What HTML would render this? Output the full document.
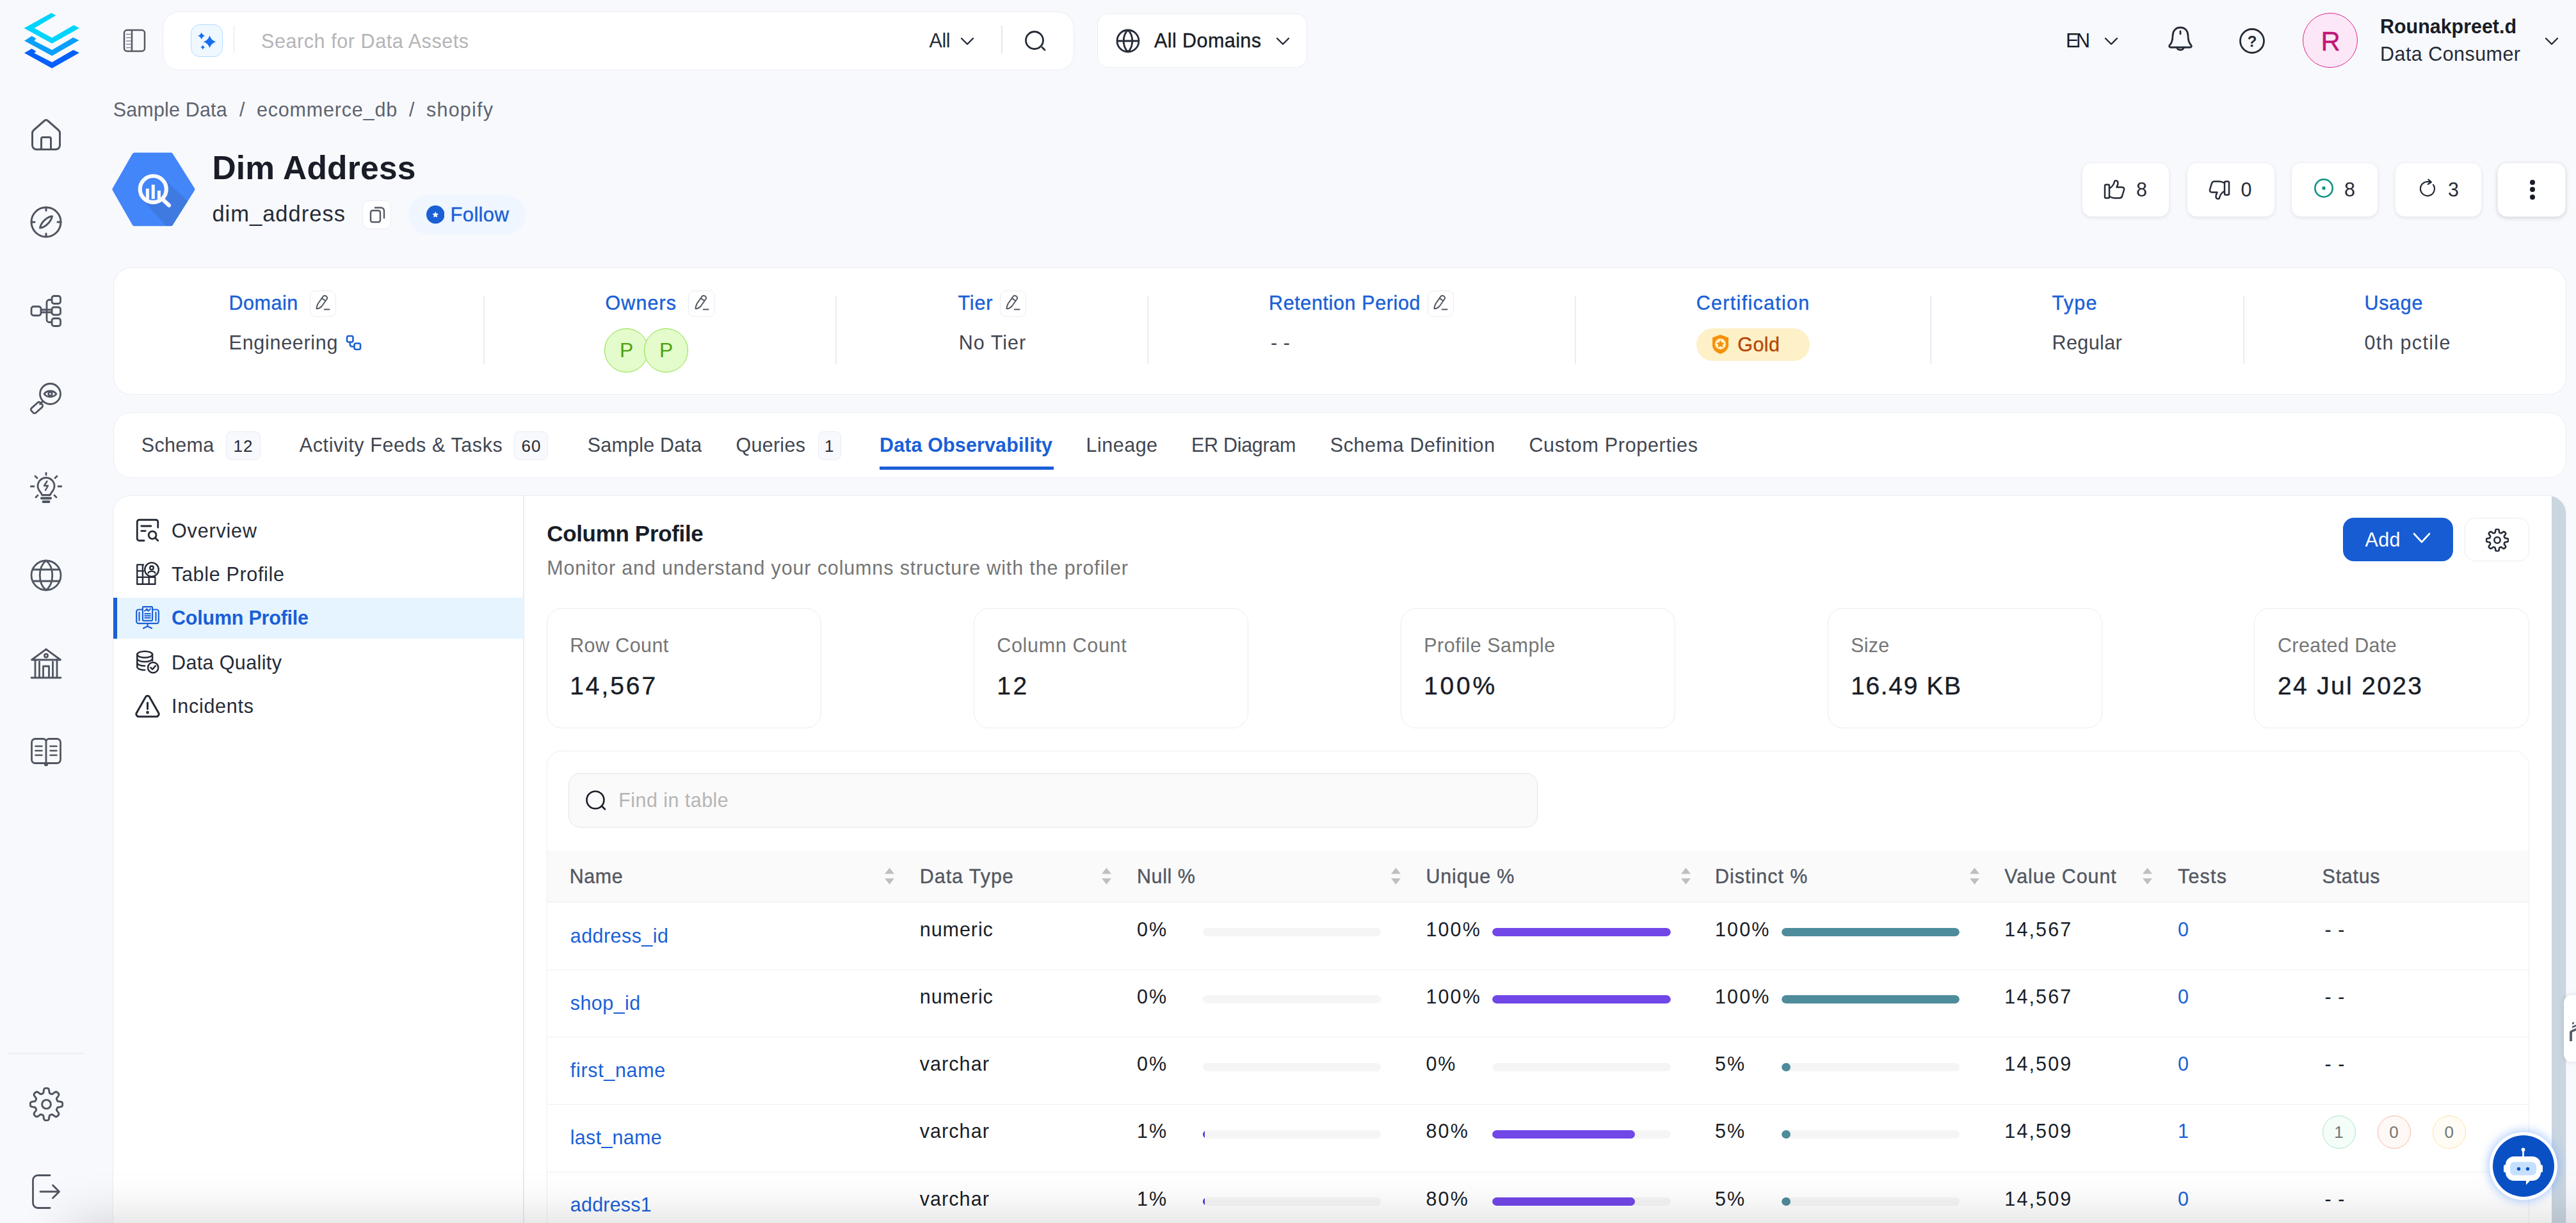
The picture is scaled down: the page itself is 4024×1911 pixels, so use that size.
<!DOCTYPE html>
<html lang="en"><head><meta charset="utf-8"><title>Dim Address - Column Profile</title>
<style>
html,body{margin:0;padding:0;}
body{width:4024px;height:1911px;overflow:hidden;background:#f8f9fc;position:relative;font-family:"Liberation Sans",sans-serif;}
.b{position:absolute;box-sizing:border-box;}
.t{position:absolute;white-space:nowrap;line-height:1;}
.card{position:absolute;box-sizing:border-box;background:#fff;border:1.5px solid #eaecf5;}
</style></head><body>
<svg class="b" style="left:20.0px;top:10.0px;" width="120.0" height="110.0" viewBox="0 0 1334 1223" fill="none">
<path d="M195 378 L670 115 L750 155 L375 378 L680 545 L1060 325 L1155 378 L680 645Z" fill="#00d4fc"/>
<path d="M200 598 L330 515 L405 560 L372 598 L680 755 L1050 540 L1150 590 L680 860Z" fill="#0a9ffb"/>
<path d="M200 810 L330 735 L405 780 L372 812 L680 970 L1050 755 L1155 805 L680 1075Z" fill="#0560fa"/>
</svg>
<svg class="b" style="left:47.0px;top:184.5px;" width="50.0" height="50.0" viewBox="0 0 50 50" fill="none"><g stroke="#4f5561" stroke-width="3" stroke-linecap="round" stroke-linejoin="round"><path d="M3.500 23 Q3.500 20 6 18 L22.500 3.500 Q25 1.500 27.500 3.500 L44 18 Q46.500 20 46.500 23 V42 a6.500 6.500 0 0 1 -6.500 6.500 H10 a6.500 6.500 0 0 1 -6.500 -6.500Z"/><path d="M17.500 48.500 V32 a2.500 2.500 0 0 1 2.500 -2.500 h10 a2.500 2.500 0 0 1 2.500 2.500 V48.500"/></g></svg>
<svg class="b" style="left:47.0px;top:322.0px;" width="50.0" height="50.0" viewBox="0 0 50 50" fill="none"><g stroke="#4f5561" stroke-width="3" stroke-linecap="round" stroke-linejoin="round"><circle cx="25" cy="25" r="23"/><path d="M25 2v5M25 43v5M2 25h5M43 25h5"/><path d="M34.500 16 C29 16 18 23 15.500 34 C21 34 32 27 34.500 16 Z"/></g></svg>
<svg class="b" style="left:47.0px;top:461.0px;" width="50.0" height="50.0" viewBox="0 0 50 50" fill="none"><g stroke="#4f5561" stroke-width="2.8" stroke-linecap="round" stroke-linejoin="round"><rect x="2" y="18" width="15" height="14" rx="3.500"/><rect x="34" y="1.500" width="13.500" height="12" rx="3.500"/><rect x="34" y="19" width="13.500" height="12" rx="3.500"/><rect x="34" y="36.500" width="13.500" height="12" rx="3.500"/><path d="M17 23h17M17 27h17M34 7.500h-4a4 4 0 0 0 -4 4v27a4 4 0 0 0 4 4h4"/></g></svg>
<svg class="b" style="left:47.0px;top:597.0px;" width="50.0" height="50.0" viewBox="0 0 50 50" fill="none"><g stroke="#4f5561" stroke-width="2.8" stroke-linecap="round" stroke-linejoin="round"><circle cx="31.500" cy="18.500" r="16"/><path d="M20 30 L15.500 34.500"/><rect x="1" y="35" width="19" height="10" rx="3" transform="rotate(-42 10.500 40)"/><path d="M22 18.500 C26 12.500 37 12.500 41 18.500 C37 24.500 26 24.500 22 18.500 Z"/><circle cx="31.500" cy="18.500" r="2.800"/></g></svg>
<svg class="b" style="left:47.0px;top:737.5px;" width="50.0" height="50.0" viewBox="0 0 50 50" fill="none"><g stroke="#4f5561" stroke-width="2.8" stroke-linecap="round" stroke-linejoin="round"><path d="M18.500 35.500 c0 -4 -6.500 -6 -6.500 -14 a13 13 0 0 1 26 0 c0 8 -6.500 10 -6.500 14 Z"/><path d="M18 40.500h14M20.500 46h9" stroke-width="4"/><path d="M26.500 14l-4.500 7h6l-4 7" stroke-width="2.400"/><path d="M25 0v4M8 6l3 3M42 6l-3 3M1 22h5M44 22h5M9 39l3-3M41 39l-3-3"/></g></svg>
<svg class="b" style="left:47.0px;top:873.6px;" width="50.0" height="50.0" viewBox="0 0 50 50" fill="none"><g stroke="#4f5561" stroke-width="2.8" stroke-linecap="round" stroke-linejoin="round"><circle cx="25" cy="25" r="23"/><path d="M4.500 16h41M4.500 34h41M25 2c-13 10 -13 36 0 46M25 2c13 10 13 36 0 46"/></g></svg>
<svg class="b" style="left:47.0px;top:1012.0px;" width="50.0" height="50.0" viewBox="0 0 50 50" fill="none"><g stroke="#4f5561" stroke-width="2.8" stroke-linecap="round" stroke-linejoin="round"><path d="M2.500 19 L25 2.500 L47.500 19 Z"/><circle cx="25" cy="12.500" r="2.600"/><path d="M8 19v27M14.500 22v24M35.500 22v24M42 19v27M20.500 46V29h9v17M2 47h46"/></g></svg>
<svg class="b" style="left:47.0px;top:1149.0px;" width="50.0" height="50.0" viewBox="0 0 50 50" fill="none"><g stroke="#4f5561" stroke-width="2.8" stroke-linecap="round" stroke-linejoin="round"><path d="M25 10 V43.500 H8 a5.500 5.500 0 0 1 -5.500 -5.500 V11 a5.500 5.500 0 0 1 5.500 -5.500 H20.500 a4.500 4.500 0 0 1 4.500 4.500 a4.500 4.500 0 0 1 4.500 -4.500 H42 a5.500 5.500 0 0 1 5.500 5.500 V38 a5.500 5.500 0 0 1 -5.500 5.500 H25"/><path d="M8.500 17h10M8.500 24h10M8.500 31h10M31.500 17h10M31.500 24h10M31.500 31h10" stroke-width="2.600"/><circle cx="25" cy="45" r="1.800" fill="#4b515d"/></g></svg>
<div class="b" style="left:12.0px;top:1645.2px;width:120.0px;height:1.6px;background:#eceef2;"></div>
<svg class="b" style="left:45.5px;top:1698.5px;" width="53.0" height="53.0" viewBox="0 0 50 50" fill="none"><g stroke="#4f5561" stroke-width="2.800" stroke-linecap="round"><path d="M25.0 1.2 L25.8 1.2 L26.6 1.3 L27.3 1.5 L28.0 2.0 L28.6 3.1 L29.0 5.1 L29.2 7.0 L29.5 8.2 L29.9 8.7 L30.4 9.0 L30.9 9.3 L31.4 9.5 L31.9 9.7 L32.5 9.9 L33.0 10.0 L33.7 9.9 L34.7 9.3 L36.3 8.1 L37.9 7.0 L39.1 6.6 L40.0 6.8 L40.7 7.1 L41.3 7.6 L41.8 8.2 L42.4 8.7 L42.9 9.3 L43.2 10.0 L43.4 10.9 L43.0 12.1 L41.9 13.7 L40.7 15.3 L40.1 16.3 L40.0 17.0 L40.1 17.5 L40.3 18.1 L40.5 18.6 L40.7 19.1 L41.0 19.6 L41.3 20.1 L41.8 20.5 L43.0 20.8 L44.9 21.0 L46.9 21.4 L48.0 22.0 L48.5 22.7 L48.7 23.4 L48.8 24.2 L48.8 25.0 L48.8 25.8 L48.7 26.6 L48.5 27.3 L48.0 28.0 L46.9 28.6 L44.9 29.0 L43.0 29.2 L41.8 29.5 L41.3 29.9 L41.0 30.4 L40.7 30.9 L40.5 31.4 L40.3 31.9 L40.1 32.5 L40.0 33.0 L40.1 33.7 L40.7 34.7 L41.9 36.3 L43.0 37.9 L43.4 39.1 L43.2 40.0 L42.9 40.7 L42.4 41.3 L41.8 41.8 L41.3 42.4 L40.7 42.9 L40.0 43.2 L39.1 43.4 L37.9 43.0 L36.3 41.9 L34.7 40.7 L33.7 40.1 L33.0 40.0 L32.5 40.1 L31.9 40.3 L31.4 40.5 L30.9 40.7 L30.4 41.0 L29.9 41.3 L29.5 41.8 L29.2 43.0 L29.0 44.9 L28.6 46.9 L28.0 48.0 L27.3 48.5 L26.6 48.7 L25.8 48.8 L25.0 48.8 L24.2 48.8 L23.4 48.7 L22.7 48.5 L22.0 48.0 L21.4 46.9 L21.0 44.9 L20.8 43.0 L20.5 41.8 L20.1 41.3 L19.6 41.0 L19.1 40.7 L18.6 40.5 L18.1 40.3 L17.5 40.1 L17.0 40.0 L16.3 40.1 L15.3 40.7 L13.7 41.9 L12.1 43.0 L10.9 43.4 L10.0 43.2 L9.3 42.9 L8.7 42.4 L8.2 41.8 L7.6 41.3 L7.1 40.7 L6.8 40.0 L6.6 39.1 L7.0 37.9 L8.1 36.3 L9.3 34.7 L9.9 33.7 L10.0 33.0 L9.9 32.5 L9.7 31.9 L9.5 31.4 L9.3 30.9 L9.0 30.4 L8.7 29.9 L8.2 29.5 L7.0 29.2 L5.1 29.0 L3.1 28.6 L2.0 28.0 L1.5 27.3 L1.3 26.6 L1.2 25.8 L1.2 25.0 L1.2 24.2 L1.3 23.4 L1.5 22.7 L2.0 22.0 L3.1 21.4 L5.1 21.0 L7.0 20.8 L8.2 20.5 L8.7 20.1 L9.0 19.6 L9.3 19.1 L9.5 18.6 L9.7 18.1 L9.9 17.5 L10.0 17.0 L9.9 16.3 L9.3 15.3 L8.1 13.7 L7.0 12.1 L6.6 10.9 L6.8 10.0 L7.1 9.3 L7.6 8.7 L8.2 8.2 L8.7 7.6 L9.3 7.1 L10.0 6.8 L10.9 6.6 L12.1 7.0 L13.7 8.1 L15.3 9.3 L16.3 9.9 L17.0 10.0 L17.5 9.9 L18.1 9.7 L18.6 9.5 L19.1 9.3 L19.6 9.0 L20.1 8.7 L20.5 8.2 L20.8 7.0 L21.0 5.1 L21.4 3.1 L22.0 2.0 L22.7 1.5 L23.4 1.3 L24.2 1.2Z" stroke-linejoin="round"/><circle cx="25" cy="25" r="6.500"/></g></svg>
<svg class="b" style="left:47.0px;top:1835.0px;" width="50.0" height="54.0" viewBox="0 -1 50 54" fill="none"><g stroke="#4f5561" stroke-width="2.800" stroke-linecap="round" stroke-linejoin="round"><path d="M31 0.500 H12 a7.500 7.500 0 0 0 -7.500 7.500 V44 a7.500 7.500 0 0 0 7.500 7.500 H31"/><path d="M16 26 H45 M35.500 16 l10 10 -10 10"/></g></svg>
<svg class="b" style="left:192.0px;top:45.0px;" width="36.0" height="37.0" viewBox="0 0 36 37" fill="none"><g stroke="#535862" stroke-width="2.500"><rect x="2" y="2" width="32" height="33" rx="4.500"/><path d="M14 2v33"/><path d="M5 8.500h8M5 13.800h8M5 19h8M5 24.300h8M5 29.500h8" stroke-width="1.400" stroke="#8a8f99"/></g></svg>
<div class="b" style="left:254.0px;top:18.0px;width:1424.0px;height:92.0px;background:#fff;border:1.5px solid #eaecf5;border-radius:26px;"></div>
<div class="b" style="left:298.0px;top:38.0px;width:50.0px;height:51.0px;background:#eff8ff;border:1.5px solid #b2ddff;border-radius:14px;"></div>
<svg class="b" style="left:308.0px;top:48.0px;" width="30.0" height="31.0" viewBox="0 0 30 31" fill="none"><path d="M19.5 7.399999999999999 Q21.852 14.847999999999999 29.3 17.2 Q21.852 19.552 19.5 27.0 Q17.148 19.552 9.7 17.2 Q17.148 14.847999999999999 19.5 7.399999999999999Z" fill="#176fee"/><path d="M6.7 2.3999999999999995 Q8.068 6.731999999999999 12.4 8.1 Q8.068 9.468 6.7 13.8 Q5.332000000000001 9.468 1.0 8.1 Q5.332000000000001 6.731999999999999 6.7 2.3999999999999995Z" fill="#176fee"/><path d="M8.8 22.2 Q9.664000000000001 24.936 12.4 25.8 Q9.664000000000001 26.664 8.8 29.400000000000002 Q7.936000000000001 26.664 5.200000000000001 25.8 Q7.936000000000001 24.936 8.8 22.2Z" fill="#176fee"/></svg>
<div class="b" style="left:364.8px;top:40.0px;width:1.4px;height:43.0px;background:#e3e5ee;"></div>
<span class="t" style="left:408.0px;top:49.2px;font-size:30.5px;color:#b4b4b6;letter-spacing:0.58px;">Search for Data Assets</span>
<span class="t" style="left:1451.5px;top:48.2px;font-size:30.5px;color:#252b37;letter-spacing:-0.43px;">All</span>
<svg class="b" style="left:1500.0px;top:58.0px;" width="22.0" height="13.0" viewBox="0 0 22 13" fill="none"><path d="M2 2 L11 11 L20 2" stroke="#252b37" stroke-width="2.4" stroke-linecap="round" stroke-linejoin="round"/></svg>
<div class="b" style="left:1564.3px;top:40.0px;width:1.4px;height:43.0px;background:#e3e5ee;"></div>
<svg class="b" style="left:1600.0px;top:47.0px;" width="35.0" height="33.0" viewBox="0 0 35 33" fill="none"><circle cx="16" cy="16" r="13.500" stroke="#252b37" stroke-width="2.8"/><path d="M28 27 l4 4" stroke="#252b37" stroke-width="2.8" stroke-linecap="round"/></svg>
<div class="b" style="left:1714.0px;top:21.0px;width:328.0px;height:85.0px;background:#fff;border:1.5px solid #eaecf5;border-radius:18px;"></div>
<svg class="b" style="left:1743.0px;top:45.0px;" width="38.0" height="38.0" viewBox="0 0 38 38" fill="none"><g stroke="#252b37" stroke-width="2.8"><circle cx="19" cy="19" r="17"/><path d="M2 19h34M19 2c-9 8 -9 26 0 34M19 2c9 8 9 26 0 34"/></g></svg>
<span class="t" style="left:1803.0px;top:48.2px;font-size:30.5px;color:#181d27;-webkit-text-stroke:0.4px #181d27;letter-spacing:0.43px;">All Domains</span>
<svg class="b" style="left:1993.0px;top:58.0px;" width="22.0" height="13.0" viewBox="0 0 22 13" fill="none"><path d="M2 2 L11 11 L20 2" stroke="#252b37" stroke-width="2.4" stroke-linecap="round" stroke-linejoin="round"/></svg>
<span class="t" style="left:3227.0px;top:48.2px;font-size:30.5px;color:#181d27;letter-spacing:-4.39px;">EN</span>
<svg class="b" style="left:3287.0px;top:58.0px;" width="22.0" height="13.0" viewBox="0 0 22 13" fill="none"><path d="M2 2 L11 11 L20 2" stroke="#252b37" stroke-width="2.4" stroke-linecap="round" stroke-linejoin="round"/></svg>
<svg class="b" style="left:3386.0px;top:40.0px;" width="40.0" height="42.0" viewBox="0 0 40 42" fill="none"><g stroke="#252b37" stroke-width="2.8" stroke-linecap="round" stroke-linejoin="round"><path d="M20 3 c-8 0 -12 6 -12 13 c0 8 -2 12 -5 15 c-1 1.500 0 3 2 3 h30 c2 0 3 -1.500 2 -3 c-3 -3 -5 -7 -5 -15 c0 -7 -4 -13 -12 -13Z"/><path d="M15 35 c1 4 9 4 10 0"/><path d="M20 9v4"/></g></svg>
<svg class="b" style="left:3497.0px;top:43.0px;" width="42.0" height="42.0" viewBox="0 0 42 42" fill="none"><circle cx="21" cy="21" r="18.500" stroke="#252b37" stroke-width="2.8"/><text x="21" y="30" text-anchor="middle" font-family="Liberation Sans, sans-serif" font-weight="700" font-size="24" fill="#252b37">?</text></svg>
<div class="b" style="left:3597.0px;top:20.0px;width:86.0px;height:86.0px;background:#fce7f6;border:1.5px solid #dd2590;border-radius:50%;"></div>
<span class="t" style="left:3625.5px;top:43.9px;font-size:42px;color:#c11574;-webkit-text-stroke:0.4px #c11574;">R</span>
<span class="t" style="left:3718.0px;top:26.2px;font-size:30.5px;color:#181d27;font-weight:700;letter-spacing:-0.04px;">Rounakpreet.d</span>
<span class="t" style="left:3718.0px;top:68.8px;font-size:30.5px;color:#252b37;letter-spacing:0.45px;">Data Consumer</span>
<svg class="b" style="left:3975.0px;top:58.0px;" width="22.0" height="13.0" viewBox="0 0 22 13" fill="none"><path d="M2 2 L11 11 L20 2" stroke="#252b37" stroke-width="2.4" stroke-linecap="round" stroke-linejoin="round"/></svg>
<span class="t" style="left:176.7px;top:155.7px;font-size:30.5px;color:#5d6370;letter-spacing:0.16px;">Sample Data</span>
<span class="t" style="left:374.0px;top:155.7px;font-size:30.5px;color:#5d6370;">/</span>
<span class="t" style="left:401.0px;top:155.7px;font-size:30.5px;color:#5d6370;letter-spacing:0.81px;">ecommerce_db</span>
<span class="t" style="left:639.0px;top:155.7px;font-size:30.5px;color:#5d6370;">/</span>
<span class="t" style="left:666.0px;top:155.7px;font-size:30.5px;color:#5d6370;letter-spacing:1.22px;">shopify</span>
<svg class="b" style="left:165.0px;top:228.0px;" width="150.0" height="136.0" viewBox="0 0 1349 1223" fill="none">
<defs><clipPath id="hx"><path d="M92 610 L387 96 H933 L1256 610 L933 1124 H387Z"/></clipPath><clipPath id="lens"><circle cx="668" cy="608" r="160"/></clipPath></defs>
<path d="M122 610 L402 122 H918 L1226 610 L918 1098 H402Z" fill="#4386fa" stroke="#4386fa" stroke-width="56" stroke-linejoin="round"/>
<g clip-path="url(#hx)"><path d="M122 610 L402 122 H918 L1226 610 L918 1098 H402Z" fill="#4386fa"/><path d="M840 480 L1400 1010 L1100 1400 L520 760Z" fill="#3e7ae0"/></g>
<path d="M810 760 L890 835" stroke="#f8f9fc" stroke-width="56" stroke-linecap="round"/>
<circle cx="668" cy="608" r="185" fill="#4386fa" stroke="#f8f9fc" stroke-width="55"/>
<g clip-path="url(#lens)" fill="#f8f9fc"><rect x="565" y="600" width="46" height="200"/><rect x="645" y="545" width="46" height="200"/><rect x="727" y="628" width="46" height="200"/></g>
</svg>
<span class="t" style="left:331.4px;top:237.0px;font-size:51.5px;color:#181d27;font-weight:700;letter-spacing:0.23px;">Dim Address</span>
<span class="t" style="left:331.4px;top:316.8px;font-size:34.5px;color:#252b37;letter-spacing:1.00px;">dim_address</span>
<div class="b" style="left:565.5px;top:312.5px;width:45.5px;height:45.5px;background:#fff;border:1.5px solid #eaecf5;border-radius:10px;"></div>
<svg class="b" style="left:577.0px;top:321.0px;" width="25.0" height="28.0" viewBox="0 0 25 28" fill="none"><g stroke="#535862" stroke-width="2.4"><rect x="2" y="8" width="15" height="18" rx="3"/><path d="M8 3.500h10a5 5 0 0 1 5 5v12"/></g></svg>
<div class="b" style="left:638.0px;top:305.0px;width:183.0px;height:60.5px;background:#eff6ff;border-radius:31px;"></div>
<svg class="b" style="left:665.5px;top:321.0px;" width="28.5" height="28.5" viewBox="0 0 28 28" fill="none"><circle cx="14" cy="14" r="14" fill="#1a5fd6"/><path d="M14 7.500l1.900 4.100 4.500.5-3.300 3.100.9 4.400-4-2.200-4 2.200.9-4.400-3.300-3.100 4.500-.5Z" fill="#fff" transform="translate(3.500 3.800) scale(0.75)"/></svg>
<span class="t" style="left:703.5px;top:319.8px;font-size:31px;color:#1a5fd6;-webkit-text-stroke:0.4px #1a5fd6;letter-spacing:0.35px;">Follow</span>
<div class="b" style="left:3251.7px;top:254.0px;width:137.6px;height:84.5px;background:#fff;border:1.5px solid #eef0f6;border-radius:15px;box-shadow:0 2px 5px rgba(16,24,40,.08);"></div>
<div class="b" style="left:3415.5px;top:254.0px;width:138.7px;height:84.5px;background:#fff;border:1.5px solid #eef0f6;border-radius:15px;box-shadow:0 2px 5px rgba(16,24,40,.08);"></div>
<div class="b" style="left:3579.2px;top:254.0px;width:135.8px;height:84.5px;background:#fff;border:1.5px solid #eef0f6;border-radius:15px;box-shadow:0 2px 5px rgba(16,24,40,.08);"></div>
<div class="b" style="left:3741.4px;top:254.0px;width:135.6px;height:84.5px;background:#fff;border:1.5px solid #eef0f6;border-radius:15px;box-shadow:0 2px 5px rgba(16,24,40,.08);"></div>
<div class="b" style="left:3901.3px;top:254.0px;width:106.7px;height:84.5px;background:#fff;border:1.5px solid #eef0f6;border-radius:15px;box-shadow:0 2px 6px rgba(16,24,40,.16);"></div>
<svg class="b" style="left:3285.5px;top:280.0px;" width="34.0" height="32.0" viewBox="0 0 34 32" fill="none"><g stroke="#252b37" stroke-width="2.5" stroke-linejoin="round" stroke-linecap="round"><rect x="2" y="8.500" width="7" height="21" rx="2"/><path d="M9 14 c4 -1 7 -6 8 -10 c.5 -2.500 5.500 -2.500 5.500 2 c0 3 -1.500 5 -2 6.500 h8 c3 0 4 2 3.500 4 l-3 10 c-.7 2 -2 3 -4 3 H17 c-3 0 -5 -1 -8 -2.500"/></g></svg>
<span class="t" style="left:3337.0px;top:281.0px;font-size:30.5px;color:#252b37;">8</span>
<svg class="b" style="left:3449.5px;top:280.5px;transform:rotate(180deg);" width="34.0" height="32.0" viewBox="0 0 34 32" fill="none"><g stroke="#252b37" stroke-width="2.5" stroke-linejoin="round" stroke-linecap="round"><rect x="2" y="8.500" width="7" height="21" rx="2"/><path d="M9 14 c4 -1 7 -6 8 -10 c.5 -2.500 5.500 -2.500 5.500 2 c0 3 -1.500 5 -2 6.500 h8 c3 0 4 2 3.500 4 l-3 10 c-.7 2 -2 3 -4 3 H17 c-3 0 -5 -1 -8 -2.500"/></g></svg>
<span class="t" style="left:3500.5px;top:281.0px;font-size:30.5px;color:#252b37;">0</span>
<svg class="b" style="left:3613.5px;top:278.0px;" width="32.0" height="32.0" viewBox="0 0 32 32" fill="none"><circle cx="16" cy="16" r="13.700" stroke="#0e9384" stroke-width="2.6"/><rect x="13.500" y="13.500" width="5" height="5" rx="1.200" fill="#0e9384"/></svg>
<span class="t" style="left:3662.0px;top:281.0px;font-size:30.5px;color:#252b37;">8</span>
<svg class="b" style="left:3775.6px;top:278.4px;" width="32.0" height="32.0" viewBox="0 0 32 32" fill="none"><g stroke="#252b37" stroke-width="2.200" stroke-linecap="round" stroke-linejoin="round"><path d="M25 10.700 A11 11 0 1 1 21 7.200"/><path d="M17.500 2.600 L21.900 6.600 L16.900 9.800"/></g></svg>
<span class="t" style="left:3824.0px;top:281.0px;font-size:30.5px;color:#252b37;">3</span>
<div class="b" style="left:3952.0px;top:281.0px;width:8.0px;height:8.0px;background:#181d27;border-radius:50%;"></div>
<div class="b" style="left:3952.0px;top:292.3px;width:8.0px;height:8.0px;background:#181d27;border-radius:50%;"></div>
<div class="b" style="left:3952.0px;top:303.5px;width:8.0px;height:8.0px;background:#181d27;border-radius:50%;"></div>
<div class="card" style="left:176.5px;top:417.5px;width:3832.0px;height:199.0px;border-radius:28px;"></div>
<span class="t" style="left:357.6px;top:458.2px;font-size:30.5px;color:#1a5fd6;-webkit-text-stroke:0.4px #1a5fd6;letter-spacing:0.49px;">Domain</span>
<div class="b" style="left:483.5px;top:453.5px;width:41.5px;height:41.5px;background:#fff;border:1.5px solid #eaecf5;border-radius:9px;"></div>
<svg class="b" style="left:490.0px;top:459.5px;" width="29.0" height="29.0" viewBox="0 0 26 26" fill="none"><g stroke="#535862" stroke-width="1.8" stroke-linecap="round" stroke-linejoin="round"><path d="M4 20 c0 -2 1 -5 2 -7 L13 3 c1 -1.500 3 -1.500 4.500 -.5 s1.800 2.800 1 4 L11 17 c-2 2 -4 3 -7 3Z M11.500 5.500 l5 3.500"/><path d="M15 21h7"/></g></svg>
<span class="t" style="left:357.6px;top:519.6px;font-size:30.5px;color:#414651;letter-spacing:0.71px;">Engineering</span>
<svg class="b" style="left:540.0px;top:523.0px;" width="25.0" height="25.0" viewBox="0 0 25 25" fill="none"><g stroke="#1a5fd6" stroke-width="2.600"><rect x="2" y="2" width="9.500" height="9.500" rx="2.500"/><rect x="13.500" y="13.500" width="9.500" height="9.500" rx="2.500"/><path d="M6.800 11.500v4a3 3 0 0 0 3 3h3.700"/></g></svg>
<div class="b" style="left:755.3px;top:461.5px;width:2.0px;height:107.5px;background:#eaecf5;"></div>
<span class="t" style="left:945.5px;top:458.2px;font-size:30.5px;color:#1a5fd6;-webkit-text-stroke:0.4px #1a5fd6;letter-spacing:1.09px;">Owners</span>
<div class="b" style="left:1075.0px;top:453.5px;width:41.5px;height:41.5px;background:#fff;border:1.5px solid #eaecf5;border-radius:9px;"></div>
<svg class="b" style="left:1081.5px;top:459.5px;" width="29.0" height="29.0" viewBox="0 0 26 26" fill="none"><g stroke="#535862" stroke-width="1.8" stroke-linecap="round" stroke-linejoin="round"><path d="M4 20 c0 -2 1 -5 2 -7 L13 3 c1 -1.500 3 -1.500 4.500 -.5 s1.800 2.800 1 4 L11 17 c-2 2 -4 3 -7 3Z M11.500 5.500 l5 3.500"/><path d="M15 21h7"/></g></svg>
<div class="b" style="left:944.0px;top:513.3px;width:68.5px;height:68.5px;background:#e4fbcc;border:1.5px solid #85e13a;border-radius:50%;"></div>
<span class="t" style="left:968.0px;top:530.9px;font-size:32px;color:#4ca30d;">P</span>
<div class="b" style="left:1006.0px;top:513.3px;width:68.5px;height:68.5px;background:#e4fbcc;border:1.5px solid #85e13a;border-radius:50%;"></div>
<span class="t" style="left:1030.0px;top:530.9px;font-size:32px;color:#4ca30d;">P</span>
<div class="b" style="left:1305.0px;top:461.5px;width:2.0px;height:107.5px;background:#eaecf5;"></div>
<span class="t" style="left:1496.5px;top:458.2px;font-size:30.5px;color:#1a5fd6;-webkit-text-stroke:0.4px #1a5fd6;letter-spacing:0.87px;">Tier</span>
<div class="b" style="left:1561.8px;top:453.5px;width:41.5px;height:41.5px;background:#fff;border:1.5px solid #eaecf5;border-radius:9px;"></div>
<svg class="b" style="left:1568.3px;top:459.5px;" width="29.0" height="29.0" viewBox="0 0 26 26" fill="none"><g stroke="#535862" stroke-width="1.8" stroke-linecap="round" stroke-linejoin="round"><path d="M4 20 c0 -2 1 -5 2 -7 L13 3 c1 -1.500 3 -1.500 4.500 -.5 s1.800 2.800 1 4 L11 17 c-2 2 -4 3 -7 3Z M11.500 5.500 l5 3.500"/><path d="M15 21h7"/></g></svg>
<span class="t" style="left:1497.7px;top:519.6px;font-size:30.5px;color:#414651;letter-spacing:1.02px;">No Tier</span>
<div class="b" style="left:1791.8px;top:461.5px;width:2.0px;height:107.5px;background:#eaecf5;"></div>
<span class="t" style="left:1982.0px;top:458.2px;font-size:30.5px;color:#1a5fd6;-webkit-text-stroke:0.4px #1a5fd6;letter-spacing:0.62px;">Retention Period</span>
<div class="b" style="left:2229.7px;top:453.5px;width:41.5px;height:41.5px;background:#fff;border:1.5px solid #eaecf5;border-radius:9px;"></div>
<svg class="b" style="left:2236.2px;top:459.5px;" width="29.0" height="29.0" viewBox="0 0 26 26" fill="none"><g stroke="#535862" stroke-width="1.8" stroke-linecap="round" stroke-linejoin="round"><path d="M4 20 c0 -2 1 -5 2 -7 L13 3 c1 -1.500 3 -1.500 4.500 -.5 s1.800 2.800 1 4 L11 17 c-2 2 -4 3 -7 3Z M11.500 5.500 l5 3.500"/><path d="M15 21h7"/></g></svg>
<span class="t" style="left:1985.0px;top:519.6px;font-size:30.5px;color:#414651;letter-spacing:0.59px;">- -</span>
<div class="b" style="left:2459.7px;top:461.5px;width:2.0px;height:107.5px;background:#eaecf5;"></div>
<span class="t" style="left:2649.8px;top:458.2px;font-size:30.5px;color:#1a5fd6;-webkit-text-stroke:0.4px #1a5fd6;letter-spacing:1.29px;">Certification</span>
<div class="b" style="left:2649.8px;top:513.3px;width:177.5px;height:50.9px;background:#fef0c7;border-radius:26px;"></div>
<svg class="b" style="left:2674.0px;top:522.0px;" width="27.0" height="32.0" viewBox="0 0 27 32" fill="none"><path d="M13.500 1 L26 5.500 V17 c0 7 -5 11.500 -12.500 14 C6 28.500 1 24 1 17 V5.500Z" fill="#f79009"/><circle cx="13.500" cy="15.500" r="8.500" fill="#fef0c7"/><path d="M13.500 9.500l1.900 3.800 4.200.6-3 3 .7 4.200-3.800-2-3.800 2 .7-4.200-3-3 4.200-.6Z" fill="#f79009"/></svg>
<span class="t" style="left:2714.3px;top:522.7px;font-size:30.5px;color:#b54708;-webkit-text-stroke:0.4px #b54708;letter-spacing:0.38px;">Gold</span>
<div class="b" style="left:3015.4px;top:461.5px;width:2.0px;height:107.5px;background:#eaecf5;"></div>
<span class="t" style="left:3205.6px;top:458.2px;font-size:30.5px;color:#1a5fd6;-webkit-text-stroke:0.4px #1a5fd6;letter-spacing:1.27px;">Type</span>
<span class="t" style="left:3205.6px;top:519.6px;font-size:30.5px;color:#414651;letter-spacing:0.38px;">Regular</span>
<div class="b" style="left:3503.6px;top:461.5px;width:2.0px;height:107.5px;background:#eaecf5;"></div>
<span class="t" style="left:3693.4px;top:458.2px;font-size:30.5px;color:#1a5fd6;-webkit-text-stroke:0.4px #1a5fd6;letter-spacing:0.71px;">Usage</span>
<span class="t" style="left:3693.4px;top:519.6px;font-size:30.5px;color:#414651;letter-spacing:1.32px;">0th pctile</span>
<div class="card" style="left:176.5px;top:644.0px;width:3832.0px;height:102.5px;border-radius:28px;"></div>
<span class="t" style="left:220.8px;top:679.8px;font-size:30.5px;color:#414651;letter-spacing:0.31px;">Schema</span>
<div class="b" style="left:352.5px;top:674.4px;width:54.0px;height:44.9px;background:#f8f9fc;border:1.5px solid #eaecf5;border-radius:9px;"></div>
<span class="t" style="left:364.5px;top:684.0px;font-size:26px;color:#252b37;letter-spacing:1.00px;">12</span>
<span class="t" style="left:467.8px;top:679.8px;font-size:30.5px;color:#414651;letter-spacing:0.59px;">Activity Feeds &amp; Tasks</span>
<div class="b" style="left:803.0px;top:674.4px;width:53.0px;height:44.9px;background:#f8f9fc;border:1.5px solid #eaecf5;border-radius:9px;"></div>
<span class="t" style="left:814.5px;top:684.0px;font-size:26px;color:#252b37;letter-spacing:1.00px;">60</span>
<span class="t" style="left:917.7px;top:679.8px;font-size:30.5px;color:#414651;letter-spacing:0.21px;">Sample Data</span>
<span class="t" style="left:1149.4px;top:679.8px;font-size:30.5px;color:#414651;letter-spacing:0.29px;">Queries</span>
<div class="b" style="left:1277.6px;top:674.4px;width:36.0px;height:44.9px;background:#f8f9fc;border:1.5px solid #eaecf5;border-radius:9px;"></div>
<span class="t" style="left:1287.9px;top:684.0px;font-size:26px;color:#252b37;">1</span>
<span class="t" style="left:1374.0px;top:679.8px;font-size:30.5px;color:#1a5fd6;font-weight:700;letter-spacing:0.13px;">Data Observability</span>
<div class="b" style="left:1374.0px;top:729.0px;width:272.0px;height:4.5px;background:#1a5fd6;"></div>
<span class="t" style="left:1696.6px;top:679.8px;font-size:30.5px;color:#414651;letter-spacing:0.49px;">Lineage</span>
<span class="t" style="left:1861.0px;top:679.8px;font-size:30.5px;color:#414651;letter-spacing:-0.29px;">ER Diagram</span>
<span class="t" style="left:2077.7px;top:679.8px;font-size:30.5px;color:#414651;letter-spacing:0.62px;">Schema Definition</span>
<span class="t" style="left:2388.4px;top:679.8px;font-size:30.5px;color:#414651;letter-spacing:0.69px;">Custom Properties</span>
<div class="card" style="left:175.5px;top:773.5px;width:3833px;height:1200px;border-radius:28px 28px 0 0;overflow:hidden;">
<div class="b" style="left:-177px;top:-775px;width:4024px;height:1911px;">
<div class="b" style="left:817.0px;top:774.0px;width:2.0px;height:1137.0px;background:#eaecf5;"></div>
<div class="b" style="left:177.0px;top:934.5px;width:641.0px;height:63.7px;background:#e6f4ff;"></div>
<div class="b" style="left:177.0px;top:934.5px;width:6.0px;height:63.7px;background:#1a5fd6;"></div>
<span class="t" style="left:268.5px;top:814.1px;font-size:30.5px;color:#252b37;letter-spacing:0.83px;">Overview</span>
<span class="t" style="left:268.5px;top:882.5px;font-size:30.5px;color:#252b37;letter-spacing:0.67px;">Table Profile</span>
<span class="t" style="left:268.5px;top:950.9px;font-size:30.5px;color:#1a5fd6;font-weight:700;letter-spacing:-0.22px;">Column Profile</span>
<span class="t" style="left:268.5px;top:1020.1px;font-size:30.5px;color:#252b37;letter-spacing:0.37px;">Data Quality</span>
<span class="t" style="left:268.5px;top:1088.9px;font-size:30.5px;color:#252b37;letter-spacing:0.73px;">Incidents</span>
<svg class="b" style="left:211.5px;top:809.0px;" width="39.0" height="39.0" viewBox="0 0 36 36" fill="none"><g stroke="#252b37" stroke-width="2.6" stroke-linecap="round" stroke-linejoin="round"><path d="M13 33 H6 a3 3 0 0 1 -3 -3 V6 a3 3 0 0 1 3 -3 H30 a3 3 0 0 1 3 3 V14"/><path d="M9 12h14M9 19h6"/><circle cx="25" cy="25" r="5.500"/><path d="M29 29l4 4"/></g></svg>
<svg class="b" style="left:211.5px;top:877.5px;" width="39.0" height="39.0" viewBox="0 0 36 36" fill="none"><g stroke="#252b37" stroke-width="2.2" stroke-linecap="round" stroke-linejoin="round"><circle cx="24" cy="12" r="10"/><circle cx="24" cy="9.500" r="2.600"/><path d="M19 17c1-3.500 9-3.500 10 0"/><path d="M12 5H3v28h26V24M3 14h9M3 23h26M11 5v28M20 23v10"/></g></svg>
<svg class="b" style="left:211.5px;top:946.5px;" width="39.0" height="39.0" viewBox="0 0 36 36" fill="none"><g stroke="#1a5fd6" stroke-width="2" stroke-linecap="round" stroke-linejoin="round"><rect x="2" y="6" width="32" height="20" rx="3"/><path d="M6 10v12M30 10v12"/><rect x="11" y="2" width="14" height="20" rx="1" fill="#e6f4ff"/><path d="M14 8l3-3 2 3 3-3M14 12h8M14 15h8M14 18h8M18 26v4M12 33l6-3 6 3"/></g></svg>
<svg class="b" style="left:211.5px;top:1015.5px;" width="39.0" height="39.0" viewBox="0 0 36 36" fill="none"><g stroke="#252b37" stroke-width="2.3" stroke-linecap="round" stroke-linejoin="round"><ellipse cx="14" cy="7" rx="11" ry="4.500"/><path d="M3 7v18c0 2.500 5 4.500 11 4.500M25 7v9M3 13c0 2.500 5 4.500 11 4.500s11-2 11-4.500M3 19c0 2.500 5 4.500 11 4.500"/><circle cx="26" cy="26" r="7.500" fill="#fff"/><path d="M22.500 26l2.500 2.500 4.500-5"/></g></svg>
<svg class="b" style="left:211.5px;top:1084.5px;" width="39.0" height="39.0" viewBox="0 0 36 36" fill="none"><g stroke="#252b37" stroke-width="2.8" stroke-linecap="round" stroke-linejoin="round"><path d="M18 3 c1.500 0 2.500 1 3 2 L34 28 c1 2 -.5 5 -3 5 H5 c-2.500 0 -4 -3 -3 -5 L15 5 c.5 -1 1.500 -2 3 -2Z"/><path d="M18 13v9"/><circle cx="18" cy="27" r=".8" fill="#252b37"/></g></svg>
<span class="t" style="left:854.7px;top:816.2px;font-size:35px;color:#181d27;font-weight:700;letter-spacing:-0.33px;">Column Profile</span>
<span class="t" style="left:854.7px;top:872.7px;font-size:30.5px;color:#757575;letter-spacing:0.86px;">Monitor and understand your columns structure with the profiler</span>
<div class="b" style="left:3660.0px;top:809.4px;width:172.5px;height:68.6px;background:#175cd3;border-radius:17px;"></div>
<span class="t" style="left:3695.0px;top:828.2px;font-size:30.5px;color:#fff;letter-spacing:0.36px;">Add</span>
<svg class="b" style="left:3769.0px;top:832.0px;" width="28.0" height="17.0" viewBox="0 0 28 17" fill="none"><path d="M2 2 L14 15 L26 2" stroke="#fff" stroke-width="2.6" stroke-linecap="round" stroke-linejoin="round"/></svg>
<div class="b" style="left:3850.5px;top:809.4px;width:101.0px;height:68.6px;background:#fff;border:1.5px solid #eaecf5;border-radius:17px;"></div>
<svg class="b" style="left:3883.0px;top:826.0px;" width="36.0" height="36.0" viewBox="0 0 50 50" fill="none"><g stroke="#252b37" stroke-width="3.600"><path d="M25.0 1.2 L25.8 1.2 L26.6 1.3 L27.3 1.5 L28.0 2.0 L28.6 3.1 L29.0 5.1 L29.2 7.0 L29.5 8.2 L29.9 8.7 L30.4 9.0 L30.9 9.3 L31.4 9.5 L31.9 9.7 L32.5 9.9 L33.0 10.0 L33.7 9.9 L34.7 9.3 L36.3 8.1 L37.9 7.0 L39.1 6.6 L40.0 6.8 L40.7 7.1 L41.3 7.6 L41.8 8.2 L42.4 8.7 L42.9 9.3 L43.2 10.0 L43.4 10.9 L43.0 12.1 L41.9 13.7 L40.7 15.3 L40.1 16.3 L40.0 17.0 L40.1 17.5 L40.3 18.1 L40.5 18.6 L40.7 19.1 L41.0 19.6 L41.3 20.1 L41.8 20.5 L43.0 20.8 L44.9 21.0 L46.9 21.4 L48.0 22.0 L48.5 22.7 L48.7 23.4 L48.8 24.2 L48.8 25.0 L48.8 25.8 L48.7 26.6 L48.5 27.3 L48.0 28.0 L46.9 28.6 L44.9 29.0 L43.0 29.2 L41.8 29.5 L41.3 29.9 L41.0 30.4 L40.7 30.9 L40.5 31.4 L40.3 31.9 L40.1 32.5 L40.0 33.0 L40.1 33.7 L40.7 34.7 L41.9 36.3 L43.0 37.9 L43.4 39.1 L43.2 40.0 L42.9 40.7 L42.4 41.3 L41.8 41.8 L41.3 42.4 L40.7 42.9 L40.0 43.2 L39.1 43.4 L37.9 43.0 L36.3 41.9 L34.7 40.7 L33.7 40.1 L33.0 40.0 L32.5 40.1 L31.9 40.3 L31.4 40.5 L30.9 40.7 L30.4 41.0 L29.9 41.3 L29.5 41.8 L29.2 43.0 L29.0 44.9 L28.6 46.9 L28.0 48.0 L27.3 48.5 L26.6 48.7 L25.8 48.8 L25.0 48.8 L24.2 48.8 L23.4 48.7 L22.7 48.5 L22.0 48.0 L21.4 46.9 L21.0 44.9 L20.8 43.0 L20.5 41.8 L20.1 41.3 L19.6 41.0 L19.1 40.7 L18.6 40.5 L18.1 40.3 L17.5 40.1 L17.0 40.0 L16.3 40.1 L15.3 40.7 L13.7 41.9 L12.1 43.0 L10.9 43.4 L10.0 43.2 L9.3 42.9 L8.7 42.4 L8.2 41.8 L7.6 41.3 L7.1 40.7 L6.8 40.0 L6.6 39.1 L7.0 37.9 L8.1 36.3 L9.3 34.7 L9.9 33.7 L10.0 33.0 L9.9 32.5 L9.7 31.9 L9.5 31.4 L9.3 30.9 L9.0 30.4 L8.7 29.9 L8.2 29.5 L7.0 29.2 L5.1 29.0 L3.1 28.6 L2.0 28.0 L1.5 27.3 L1.3 26.6 L1.2 25.8 L1.2 25.0 L1.2 24.2 L1.3 23.4 L1.5 22.7 L2.0 22.0 L3.1 21.4 L5.1 21.0 L7.0 20.8 L8.2 20.5 L8.7 20.1 L9.0 19.6 L9.3 19.1 L9.5 18.6 L9.7 18.1 L9.9 17.5 L10.0 17.0 L9.9 16.3 L9.3 15.3 L8.1 13.7 L7.0 12.1 L6.6 10.9 L6.8 10.0 L7.1 9.3 L7.6 8.7 L8.2 8.2 L8.7 7.6 L9.3 7.1 L10.0 6.8 L10.9 6.6 L12.1 7.0 L13.7 8.1 L15.3 9.3 L16.3 9.9 L17.0 10.0 L17.5 9.9 L18.1 9.7 L18.6 9.5 L19.1 9.3 L19.6 9.0 L20.1 8.7 L20.5 8.2 L20.8 7.0 L21.0 5.1 L21.4 3.1 L22.0 2.0 L22.7 1.5 L23.4 1.3 L24.2 1.2Z" stroke-linejoin="round"/><circle cx="25" cy="25" r="6.500"/></g></svg>
<div class="card" style="left:854.0px;top:950.0px;width:429.5px;height:188.0px;border-radius:24px;border-width:1.5px;"></div>
<span class="t" style="left:890.7px;top:993.9px;font-size:30.5px;color:#757575;letter-spacing:0.40px;">Row Count</span>
<span class="t" style="left:890.7px;top:1052.3px;font-size:39px;color:#181d27;-webkit-text-stroke:0.4px #181d27;letter-spacing:2.93px;">14,567</span>
<div class="card" style="left:1521.0px;top:950.0px;width:429.5px;height:188.0px;border-radius:24px;border-width:1.5px;"></div>
<span class="t" style="left:1557.7px;top:993.9px;font-size:30.5px;color:#757575;letter-spacing:0.69px;">Column Count</span>
<span class="t" style="left:1557.7px;top:1052.3px;font-size:39px;color:#181d27;-webkit-text-stroke:0.4px #181d27;letter-spacing:3.71px;">12</span>
<div class="card" style="left:2188.0px;top:950.0px;width:429.5px;height:188.0px;border-radius:24px;border-width:1.5px;"></div>
<span class="t" style="left:2224.7px;top:993.9px;font-size:30.5px;color:#757575;letter-spacing:0.51px;">Profile Sample</span>
<span class="t" style="left:2224.7px;top:1052.3px;font-size:39px;color:#181d27;-webkit-text-stroke:0.4px #181d27;letter-spacing:3.72px;">100%</span>
<div class="card" style="left:2855.0px;top:950.0px;width:429.5px;height:188.0px;border-radius:24px;border-width:1.5px;"></div>
<span class="t" style="left:2891.7px;top:993.9px;font-size:30.5px;color:#757575;letter-spacing:0.23px;">Size</span>
<span class="t" style="left:2891.7px;top:1052.3px;font-size:39px;color:#181d27;-webkit-text-stroke:0.4px #181d27;letter-spacing:1.64px;">16.49 KB</span>
<div class="card" style="left:3521.7px;top:950.0px;width:429.5px;height:188.0px;border-radius:24px;border-width:1.5px;"></div>
<span class="t" style="left:3558.4px;top:993.9px;font-size:30.5px;color:#757575;letter-spacing:0.41px;">Created Date</span>
<span class="t" style="left:3558.4px;top:1052.3px;font-size:39px;color:#181d27;-webkit-text-stroke:0.4px #181d27;letter-spacing:2.34px;">24 Jul 2023</span>
<div class="card" style="left:854px;top:1173.3px;width:3097.5px;height:900px;border-radius:24px 24px 0 0;border-width:1.5px;border-color:#eceef3;overflow:hidden;">
<div class="b" style="left:-855.5px;top:-1174.8px;width:4024px;height:1911px;">
<div class="b" style="left:889.0px;top:1208.6px;width:1513.5px;height:85.4px;background:#fafafa;border:1.5px solid #e4e4e7;border-radius:18px;"></div>
<svg class="b" style="left:915.0px;top:1235.0px;" width="35.0" height="33.0" viewBox="0 0 35 33" fill="none"><circle cx="16" cy="16" r="13.500" stroke="#181d27" stroke-width="2.6"/><path d="M27 26.500 l4 4" stroke="#181d27" stroke-width="2.6" stroke-linecap="round"/></svg>
<span class="t" style="left:967.3px;top:1235.6px;font-size:30.5px;color:#b5b5b5;letter-spacing:0.44px;">Find in table</span>
<div class="b" style="left:854.0px;top:1329.8px;width:3098.0px;height:81.2px;background:#fafafa;border-bottom:1.5px solid #eaecf0;"></div>
<span class="t" style="left:890.7px;top:1354.8px;font-size:30.5px;color:#535862;-webkit-text-stroke:0.4px #535862;letter-spacing:0.52px;">Name</span>
<svg class="b" style="left:1382.0px;top:1356.0px;" width="17.0" height="28.0" viewBox="0 0 17 28" fill="none"><path d="M8.500 1 L16 10.500 H1Z M8.500 27 L1 17.500 H16Z" fill="#bfbfbf"/></svg>
<span class="t" style="left:1437.8px;top:1354.8px;font-size:30.5px;color:#535862;-webkit-text-stroke:0.4px #535862;letter-spacing:0.94px;">Data Type</span>
<svg class="b" style="left:1720.5px;top:1356.0px;" width="17.0" height="28.0" viewBox="0 0 17 28" fill="none"><path d="M8.500 1 L16 10.500 H1Z M8.500 27 L1 17.500 H16Z" fill="#bfbfbf"/></svg>
<span class="t" style="left:1777.0px;top:1354.8px;font-size:30.5px;color:#535862;-webkit-text-stroke:0.4px #535862;letter-spacing:0.57px;">Null %</span>
<svg class="b" style="left:2173.0px;top:1356.0px;" width="17.0" height="28.0" viewBox="0 0 17 28" fill="none"><path d="M8.500 1 L16 10.500 H1Z M8.500 27 L1 17.500 H16Z" fill="#bfbfbf"/></svg>
<span class="t" style="left:2228.4px;top:1354.8px;font-size:30.5px;color:#535862;-webkit-text-stroke:0.4px #535862;letter-spacing:0.83px;">Unique %</span>
<svg class="b" style="left:2625.5px;top:1356.0px;" width="17.0" height="28.0" viewBox="0 0 17 28" fill="none"><path d="M8.500 1 L16 10.500 H1Z M8.500 27 L1 17.500 H16Z" fill="#bfbfbf"/></svg>
<span class="t" style="left:2680.0px;top:1354.8px;font-size:30.5px;color:#535862;-webkit-text-stroke:0.4px #535862;letter-spacing:0.99px;">Distinct %</span>
<svg class="b" style="left:3076.5px;top:1356.0px;" width="17.0" height="28.0" viewBox="0 0 17 28" fill="none"><path d="M8.500 1 L16 10.500 H1Z M8.500 27 L1 17.500 H16Z" fill="#bfbfbf"/></svg>
<span class="t" style="left:3132.3px;top:1354.8px;font-size:30.5px;color:#535862;-webkit-text-stroke:0.4px #535862;letter-spacing:0.89px;">Value Count</span>
<svg class="b" style="left:3347.0px;top:1356.0px;" width="17.0" height="28.0" viewBox="0 0 17 28" fill="none"><path d="M8.500 1 L16 10.500 H1Z M8.500 27 L1 17.500 H16Z" fill="#bfbfbf"/></svg>
<span class="t" style="left:3403.0px;top:1354.8px;font-size:30.5px;color:#535862;-webkit-text-stroke:0.4px #535862;letter-spacing:1.20px;">Tests</span>
<span class="t" style="left:3628.6px;top:1354.8px;font-size:30.5px;color:#535862;-webkit-text-stroke:0.4px #535862;letter-spacing:0.71px;">Status</span>
<span class="t" style="left:891.8px;top:1447.8px;font-size:30.5px;color:#1a5fd6;letter-spacing:0.43px;">address_id</span>
<span class="t" style="left:1437.8px;top:1438.0px;font-size:30.5px;color:#181d27;letter-spacing:0.93px;">numeric</span>
<span class="t" style="left:1777.0px;top:1438.0px;font-size:30.5px;color:#181d27;letter-spacing:1.93px;">0%</span>
<div class="b" style="left:1879.8px;top:1451.3px;width:278.5px;height:13.0px;background:#f5f5f5;border-radius:7px;overflow:hidden;"></div>
<span class="t" style="left:2228.4px;top:1438.0px;font-size:30.5px;color:#181d27;letter-spacing:2.14px;">100%</span>
<div class="b" style="left:2332.0px;top:1451.3px;width:278.5px;height:13.0px;background:#f5f5f5;border-radius:7px;overflow:hidden;"><div style="position:absolute;left:0;top:0;height:100%;width:278.5px;background:#7147e8;border-radius:7px;"></div></div>
<span class="t" style="left:2680.0px;top:1438.0px;font-size:30.5px;color:#181d27;letter-spacing:2.14px;">100%</span>
<div class="b" style="left:2783.7px;top:1451.3px;width:278.5px;height:13.0px;background:#f5f5f5;border-radius:7px;overflow:hidden;"><div style="position:absolute;left:0;top:0;height:100%;width:278.5px;background:#4e8c9c;border-radius:7px;"></div></div>
<span class="t" style="left:3132.3px;top:1438.0px;font-size:30.5px;color:#181d27;letter-spacing:2.13px;">14,567</span>
<span class="t" style="left:3403.0px;top:1438.0px;font-size:30.5px;color:#1a5fd6;">0</span>
<span class="t" style="left:3632.4px;top:1438.0px;font-size:30.5px;color:#181d27;letter-spacing:1.09px;">- -</span>
<div class="b" style="left:854.0px;top:1515.5px;width:3098.0px;height:1.5px;background:#eef0f3;"></div>
<span class="t" style="left:891.8px;top:1552.9px;font-size:30.5px;color:#1a5fd6;letter-spacing:0.43px;">shop_id</span>
<span class="t" style="left:1437.8px;top:1543.1px;font-size:30.5px;color:#181d27;letter-spacing:0.93px;">numeric</span>
<span class="t" style="left:1777.0px;top:1543.1px;font-size:30.5px;color:#181d27;letter-spacing:1.93px;">0%</span>
<div class="b" style="left:1879.8px;top:1556.4px;width:278.5px;height:13.0px;background:#f5f5f5;border-radius:7px;overflow:hidden;"></div>
<span class="t" style="left:2228.4px;top:1543.1px;font-size:30.5px;color:#181d27;letter-spacing:2.14px;">100%</span>
<div class="b" style="left:2332.0px;top:1556.4px;width:278.5px;height:13.0px;background:#f5f5f5;border-radius:7px;overflow:hidden;"><div style="position:absolute;left:0;top:0;height:100%;width:278.5px;background:#7147e8;border-radius:7px;"></div></div>
<span class="t" style="left:2680.0px;top:1543.1px;font-size:30.5px;color:#181d27;letter-spacing:2.14px;">100%</span>
<div class="b" style="left:2783.7px;top:1556.4px;width:278.5px;height:13.0px;background:#f5f5f5;border-radius:7px;overflow:hidden;"><div style="position:absolute;left:0;top:0;height:100%;width:278.5px;background:#4e8c9c;border-radius:7px;"></div></div>
<span class="t" style="left:3132.3px;top:1543.1px;font-size:30.5px;color:#181d27;letter-spacing:2.13px;">14,567</span>
<span class="t" style="left:3403.0px;top:1543.1px;font-size:30.5px;color:#1a5fd6;">0</span>
<span class="t" style="left:3632.4px;top:1543.1px;font-size:30.5px;color:#181d27;letter-spacing:1.09px;">- -</span>
<div class="b" style="left:854.0px;top:1620.5px;width:3098.0px;height:1.5px;background:#eef0f3;"></div>
<span class="t" style="left:891.8px;top:1658.0px;font-size:30.5px;color:#1a5fd6;letter-spacing:0.67px;">first_name</span>
<span class="t" style="left:1437.8px;top:1648.2px;font-size:30.5px;color:#181d27;letter-spacing:1.05px;">varchar</span>
<span class="t" style="left:1777.0px;top:1648.2px;font-size:30.5px;color:#181d27;letter-spacing:1.93px;">0%</span>
<div class="b" style="left:1879.8px;top:1661.6px;width:278.5px;height:13.0px;background:#f5f5f5;border-radius:7px;overflow:hidden;"></div>
<span class="t" style="left:2228.4px;top:1648.2px;font-size:30.5px;color:#181d27;letter-spacing:1.93px;">0%</span>
<div class="b" style="left:2332.0px;top:1661.6px;width:278.5px;height:13.0px;background:#f5f5f5;border-radius:7px;overflow:hidden;"></div>
<span class="t" style="left:2680.0px;top:1648.2px;font-size:30.5px;color:#181d27;letter-spacing:1.93px;">5%</span>
<div class="b" style="left:2783.7px;top:1661.6px;width:278.5px;height:13.0px;background:#f5f5f5;border-radius:7px;overflow:hidden;"><div style="position:absolute;left:0;top:0;height:100%;width:13.9px;background:#4e8c9c;border-radius:7px;"></div></div>
<span class="t" style="left:3132.3px;top:1648.2px;font-size:30.5px;color:#181d27;letter-spacing:2.13px;">14,509</span>
<span class="t" style="left:3403.0px;top:1648.2px;font-size:30.5px;color:#1a5fd6;">0</span>
<span class="t" style="left:3632.4px;top:1648.2px;font-size:30.5px;color:#181d27;letter-spacing:1.09px;">- -</span>
<div class="b" style="left:854.0px;top:1725.5px;width:3098.0px;height:1.5px;background:#eef0f3;"></div>
<span class="t" style="left:891.8px;top:1763.2px;font-size:30.5px;color:#1a5fd6;letter-spacing:0.28px;">last_name</span>
<span class="t" style="left:1437.8px;top:1753.4px;font-size:30.5px;color:#181d27;letter-spacing:1.05px;">varchar</span>
<span class="t" style="left:1777.0px;top:1753.4px;font-size:30.5px;color:#181d27;letter-spacing:1.93px;">1%</span>
<div class="b" style="left:1879.8px;top:1766.7px;width:278.5px;height:13.0px;background:#f5f5f5;border-radius:7px;overflow:hidden;"><div style="position:absolute;left:0;top:0;height:100%;width:3.5px;background:#5b36c9;"></div></div>
<span class="t" style="left:2228.4px;top:1753.4px;font-size:30.5px;color:#181d27;letter-spacing:2.25px;">80%</span>
<div class="b" style="left:2332.0px;top:1766.7px;width:278.5px;height:13.0px;background:#f5f5f5;border-radius:7px;overflow:hidden;"><div style="position:absolute;left:0;top:0;height:100%;width:222.8px;background:#7147e8;border-radius:7px;"></div></div>
<span class="t" style="left:2680.0px;top:1753.4px;font-size:30.5px;color:#181d27;letter-spacing:1.93px;">5%</span>
<div class="b" style="left:2783.7px;top:1766.7px;width:278.5px;height:13.0px;background:#f5f5f5;border-radius:7px;overflow:hidden;"><div style="position:absolute;left:0;top:0;height:100%;width:13.9px;background:#4e8c9c;border-radius:7px;"></div></div>
<span class="t" style="left:3132.3px;top:1753.4px;font-size:30.5px;color:#181d27;letter-spacing:2.13px;">14,509</span>
<span class="t" style="left:3403.0px;top:1753.4px;font-size:30.5px;color:#1a5fd6;">1</span>
<div class="b" style="left:3628.5px;top:1743.9px;width:52.0px;height:52.0px;background:#f5fdf9;border:1.5px solid #a6e9c8;border-radius:50%;"></div>
<span class="t" style="left:3647.2px;top:1757.4px;font-size:26px;color:#757575;">1</span>
<div class="b" style="left:3714.6px;top:1743.9px;width:52.0px;height:52.0px;background:#fef8f6;border:1.5px solid #f9b9a8;border-radius:50%;"></div>
<span class="t" style="left:3733.3px;top:1757.4px;font-size:26px;color:#757575;">0</span>
<div class="b" style="left:3800.7px;top:1743.9px;width:52.0px;height:52.0px;background:#fffcf5;border:1.5px solid #fde3a4;border-radius:50%;"></div>
<span class="t" style="left:3819.4px;top:1757.4px;font-size:26px;color:#757575;">0</span>
<div class="b" style="left:854.0px;top:1831.5px;width:3098.0px;height:1.5px;background:#eef0f3;"></div>
<span class="t" style="left:891.8px;top:1868.3px;font-size:30.5px;color:#1a5fd6;letter-spacing:0.21px;">address1</span>
<span class="t" style="left:1437.8px;top:1858.5px;font-size:30.5px;color:#181d27;letter-spacing:1.05px;">varchar</span>
<span class="t" style="left:1777.0px;top:1858.5px;font-size:30.5px;color:#181d27;letter-spacing:1.93px;">1%</span>
<div class="b" style="left:1879.8px;top:1871.8px;width:278.5px;height:13.0px;background:#f5f5f5;border-radius:7px;overflow:hidden;"><div style="position:absolute;left:0;top:0;height:100%;width:3.5px;background:#5b36c9;"></div></div>
<span class="t" style="left:2228.4px;top:1858.5px;font-size:30.5px;color:#181d27;letter-spacing:2.25px;">80%</span>
<div class="b" style="left:2332.0px;top:1871.8px;width:278.5px;height:13.0px;background:#f5f5f5;border-radius:7px;overflow:hidden;"><div style="position:absolute;left:0;top:0;height:100%;width:222.8px;background:#7147e8;border-radius:7px;"></div></div>
<span class="t" style="left:2680.0px;top:1858.5px;font-size:30.5px;color:#181d27;letter-spacing:1.93px;">5%</span>
<div class="b" style="left:2783.7px;top:1871.8px;width:278.5px;height:13.0px;background:#f5f5f5;border-radius:7px;overflow:hidden;"><div style="position:absolute;left:0;top:0;height:100%;width:13.9px;background:#4e8c9c;border-radius:7px;"></div></div>
<span class="t" style="left:3132.3px;top:1858.5px;font-size:30.5px;color:#181d27;letter-spacing:2.13px;">14,509</span>
<span class="t" style="left:3403.0px;top:1858.5px;font-size:30.5px;color:#1a5fd6;">0</span>
<span class="t" style="left:3632.4px;top:1858.5px;font-size:30.5px;color:#181d27;letter-spacing:1.09px;">- -</span>
</div></div>
<div class="b" style="left:3986.5px;top:774.0px;width:22.0px;height:1137.0px;background:#c9d6e0;"></div>
</div></div>
<div class="b" style="left:4005.0px;top:1555.0px;width:35.0px;height:104.0px;background:#fff;border-radius:12px;box-shadow:0 0 8px rgba(0,0,0,.12);"></div>
<svg class="b" style="left:4013.0px;top:1590.0px;" width="17.0" height="40.0" viewBox="0 0 17 40" fill="none"><path d="M3 20 l9 -4 v4 l-7 3 v14 h-4 V22Z M5 8 l3 -1.500 v3 l-3 1.500Z M5 13.500 l7 -3 v3 l-7 3Z" fill="#5a5f6b"/></svg>
<div class="b" style="left:110.0px;top:1913.0px;width:4014.0px;height:77.0px;box-shadow:0 0 80px 4px rgba(0,0,0,.17);"></div>
<div class="b" style="left:3888.5px;top:1769.0px;width:106.0px;height:106.0px;background:#fff;border-radius:50%;box-shadow:0 0 14px 3px rgba(120,170,255,.55);"></div>
<div class="b" style="left:3893.5px;top:1774.0px;width:96.0px;height:96.0px;background:#0950c5;border-radius:50%;"></div>
<svg class="b" style="left:3907.0px;top:1790.0px;" width="69.0" height="66.0" viewBox="0 0 69 66" fill="none"><path d="M34.500 7v10" stroke="#fff" stroke-width="2.600"/><circle cx="34.500" cy="6.500" r="2.900" fill="#fff"/><path d="M20 17 H49 a13 13 0 0 1 13 13 v12 a13 13 0 0 1 -13 13 H45 l-6 6.500 v-6.500 H20 a13 13 0 0 1 -13 -13 V30 a13 13 0 0 1 13 -13Z" fill="#fff"/><rect x="4" y="30" width="5" height="12" rx="2.500" fill="#fff"/><rect x="60" y="30" width="5" height="12" rx="2.500" fill="#fff"/><rect x="14" y="25.500" width="41" height="21" rx="7" fill="#c5e0ff"/><circle cx="27.500" cy="36.500" r="2.700" fill="#0950c5"/><circle cx="41.500" cy="36.500" r="2.700" fill="#0950c5"/></svg>
</body></html>
